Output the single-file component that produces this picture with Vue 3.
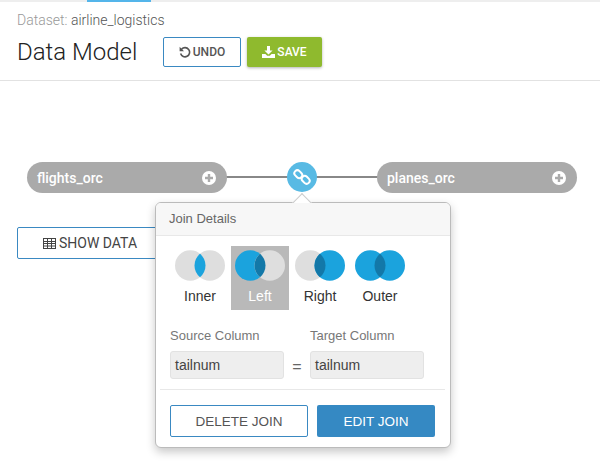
<script setup>
const lens = 'M25 3.77A15.25 15.25 0 0 1 25 27.23A15.25 15.25 0 0 1 25 3.77Z'
const joins = [
  { name: 'Inner', left: '#dedede', right: '#dedede', mid: '#1ba3dd' },
  { name: 'Left', left: '#1ba3dd', right: '#dedede', mid: '#1378a8', active: true },
  { name: 'Right', left: '#dedede', right: '#1ba3dd', mid: '#1378a8' },
  { name: 'Outer', left: '#1ba3dd', right: '#1ba3dd', mid: '#1378a8' }
]
const nodes = ['flights_orc', 'planes_orc']
</script>

<template>
  <div class="page">
    <div class="topbar"><span class="tab"></span></div>
    <header class="head">
      <div class="dataset"><span class="muted">Dataset:</span> airline_logistics</div>
      <div class="title-row">
        <h1>Data Model</h1>
        <button class="btn undo">
          <svg width="12" height="12" viewBox="0 0 12 12"><path d="M2.6 3.1A4.6 4.6 0 1 1 1.6 7.6" fill="none" stroke="#555" stroke-width="1.6"/><path d="M0.6 .8v4.4h4.4z" fill="#555"/></svg>
          UNDO
        </button>
        <button class="btn save">
          <svg width="13" height="12" viewBox="0 0 13 12"><path d="M5 0h3v4.5h2.6L6.5 8.6 2.4 4.5H5z" fill="#fff"/><path d="M0 8h3.4l1.8 1.8h2.6L9.6 8H13v4H0z" fill="#fff"/></svg>
          SAVE
        </button>
      </div>
    </header>

    <main class="canvas">
      <div class="graph">
        <div class="node" v-for="n in nodes" :key="n">
          <span>{{ n }}</span>
          <svg width="14" height="14" viewBox="0 0 14 14"><circle cx="7" cy="7" r="7" fill="#fff"/><path d="M3 7h8M7 3v8" stroke="#aaa" stroke-width="2.4"/></svg>
        </div>
        <div class="link">
          <svg width="18" height="18" viewBox="0 0 18 18" fill="none" stroke="#fff" stroke-width="2">
            <rect x="1" y="3.2" width="8.6" height="6" rx="3" transform="rotate(45 5.3 6.2)"/>
            <rect x="8.4" y="8.8" width="8.6" height="6" rx="3" transform="rotate(45 12.7 11.8)"/>
          </svg>
        </div>
      </div>

      <button class="btn show">
        <svg width="13" height="11" viewBox="0 0 13 11" fill="none" stroke="#444" stroke-width="1"><rect x=".5" y=".5" width="12" height="10"/><path d="M.5 3.5h12M.5 5.5h12M.5 8h12M4.5 .5v10M8.5 .5v10"/></svg>
        SHOW DATA
      </button>

      <section class="popover">
        <span class="arrow"></span>
        <div class="pop-head">Join Details</div>
        <div class="types">
          <div class="type" v-for="j in joins" :key="j.name" :class="{ active: j.active }">
            <svg width="50" height="31" viewBox="0 0 50 31">
              <circle cx="15.25" cy="15.5" r="15.25" :fill="j.left"/>
              <circle cx="34.75" cy="15.5" r="15.25" :fill="j.right"/>
              <path :d="lens" :fill="j.mid"/>
            </svg>
            <span>{{ j.name }}</span>
          </div>
        </div>
        <div class="cols">
          <div class="col">
            <label>Source Column</label>
            <div class="field">tailnum</div>
          </div>
          <span class="eq">=</span>
          <div class="col">
            <label>Target Column</label>
            <div class="field">tailnum</div>
          </div>
        </div>
        <div class="actions">
          <button class="act del">DELETE JOIN</button>
          <button class="act edit">EDIT JOIN</button>
        </div>
      </section>
    </main>
  </div>
</template>

<style>
html, body { margin: 0; background: #fff; }
</style>

<style scoped>
.page {
  width: 600px;
  height: 462px;
  overflow: hidden;
  position: relative;
  font-family: Roboto, "Liberation Sans", sans-serif;
  color: #333;
}
.topbar { height: 2px; background: #eee; padding-left: 87px; }
.tab { display: block; width: 64px; height: 2px; background: #54b5ea; }
.head { height: 79px; box-sizing: border-box; border-bottom: 1px solid #e2e2e2; padding: 10px 17px 0; }
.dataset { font-size: 14px; line-height: 16px; color: #555; font-weight: 300; }
.muted { color: #999; }
.title-row { display: flex; align-items: center; margin-top: 9px; height: 30px; }
h1 { margin: 0; font-size: 24px; line-height: 30px; font-weight: 300; color: #222; width: 146px; }
.btn {
  height: 30px;
  box-sizing: border-box;
  border-radius: 2px;
  font-family: inherit;
  font-size: 12px;
  font-weight: 500;
  display: flex;
  align-items: center;
  justify-content: center;
  gap: 2px;
  padding: 0;
  cursor: pointer;
}
.undo { width: 78px; background: #fff; border: 1px solid #3a89c2; color: #555; }
.save { width: 75px; margin-left: 6px; background: #8fba2e; border: 0; color: #fff; box-shadow: 0 1px 3px rgba(0,0,0,.3); }
.canvas { position: relative; padding: 81px 0 0 17px; }
.graph { position: relative; width: 550px; height: 31px; margin-left: 10px; display: flex; justify-content: space-between; align-items: flex-start; }
.graph::before { content: ""; position: absolute; left: 190px; right: 190px; top: 14px; height: 2px; background: #888; }
.node {
  position: relative;
  width: 200px;
  height: 31px;
  box-sizing: border-box;
  border-radius: 16px;
  background: #aaa;
  color: #fff;
  font-size: 14px;
  font-weight: 500;
  display: flex;
  align-items: center;
  justify-content: space-between;
  padding: 0 11px 0 10px;
}
.link {
  position: absolute;
  left: 260px;
  top: 0;
  width: 30px;
  height: 30px;
  border-radius: 50%;
  background: #58bae4;
  display: flex;
  align-items: center;
  justify-content: center;
}
.show {
  width: 146px;
  height: 32px;
  margin-top: 34px;
  background: #fff;
  border: 1px solid #3a89c2;
  color: #444;
  font-size: 14px;
  font-weight: 400;
  gap: 3px;
}
.popover {
  position: absolute;
  left: 155px;
  top: 121px;
  width: 296px;
  height: 246px;
  box-sizing: border-box;
  background: #fff;
  border: 1px solid #bbb;
  border-radius: 6px;
  box-shadow: 0 4px 10px rgba(0,0,0,.22);
  font-family: "Liberation Sans", Arial, sans-serif;
}
.arrow {
  position: absolute;
  left: 139px;
  top: -7px;
  width: 13px;
  height: 13px;
  background: #fff;
  border-left: 1px solid #ccc;
  border-top: 1px solid #ccc;
  transform: rotate(45deg);
}
.pop-head {
  position: relative;
  height: 33px;
  box-sizing: border-box;
  padding-left: 13px;
  line-height: 32px;
  font-size: 13px;
  color: #666;
  background: #f7f7f7;
  border-bottom: 1px solid #e8e8e8;
  border-radius: 5px 5px 0 0;
}
.types { display: flex; margin: 10px 0 0 15px; }
.type {
  width: 58px;
  height: 64px;
  margin-right: 2px;
  display: flex;
  flex-direction: column;
  align-items: center;
  font-size: 14px;
  color: #333;
  padding-top: 4px;
  box-sizing: border-box;
}
.type span { margin-top: 6px; line-height: 18px; }
.active { background: #b9b9b9; color: #fff; }
.cols { display: flex; align-items: flex-end; margin: 17px 0 0 14px; }
.col { width: 114px; }
.col label { display: block; font-size: 13px; line-height: 18px; color: #777; margin-bottom: 6px; }
.field {
  height: 28px;
  box-sizing: border-box;
  padding-left: 4px;
  line-height: 26px;
  font-size: 14px;
  color: #444;
  background: #eee;
  border: 1px solid #e2e2e2;
  border-radius: 3px;
}
.eq { width: 26px; text-align: center; font-size: 16px; color: #666; line-height: 24px; }
.actions {
  display: flex;
  justify-content: space-between;
  margin: 10px 5px 0 4px;
  padding: 15px 10px 0;
  border-top: 1px solid #e8e8e8;
}
.act {
  height: 32px;
  box-sizing: border-box;
  border-radius: 2px;
  font-family: inherit;
  font-size: 13.5px;
  padding: 0;
  cursor: pointer;
}
.del { width: 138px; background: #fff; border: 1px solid #3a89c2; color: #555; }
.edit { width: 118px; background: #3589c3; border: 0; color: #fff; }
</style>
